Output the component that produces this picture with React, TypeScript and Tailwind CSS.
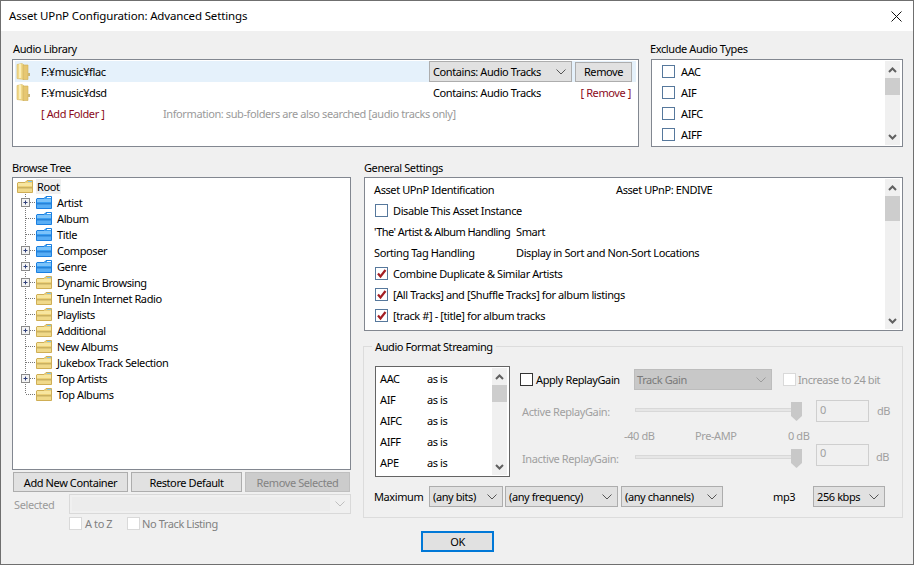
import React from 'react';

const FOLDERS = [
	{ name: 'Artist', plus: true, blue: true },
	{ name: 'Album', blue: true },
	{ name: 'Title', blue: true },
	{ name: 'Composer', plus: true, blue: true },
	{ name: 'Genre', plus: true, blue: true },
	{ name: 'Dynamic Browsing', plus: true },
	{ name: 'TuneIn Internet Radio' },
	{ name: 'Playlists' },
	{ name: 'Additional', plus: true },
	{ name: 'New Albums' },
	{ name: 'Jukebox Track Selection' },
	{ name: 'Top Artists', plus: true },
	{ name: 'Top Albums' },
];

const FORMATS = ['AAC', 'AIF', 'AIFC', 'AIFF', 'APE'];

function Chevron({ color = '#555' }: { color?: string }) {
	return (
		<svg width="10" height="6" viewBox="0 0 10 6" className="shrink-0">
			<polyline points="0.5,0.5 5,5 9.5,0.5" fill="none" stroke={color} strokeWidth="1" />
		</svg>
	);
}

function Scrollbar({ thumb }: { thumb: number }) {
	return (
		<div className="flex h-full w-[15px] shrink-0 flex-col bg-[#f0f0f0]">
			<div className="flex h-[17px] items-center justify-center">
				<svg width="9" height="6" viewBox="0 0 9 6">
					<polyline points="1,5 4.5,1.5 8,5" fill="none" stroke="#606060" strokeWidth="2" />
				</svg>
			</div>
			<div className="bg-[#cdcdcd]" style={{ height: thumb }} />
			<div className="flex-1" />
			<div className="flex h-[17px] items-center justify-center">
				<svg width="9" height="6" viewBox="0 0 9 6">
					<polyline points="1,1 4.5,4.5 8,1" fill="none" stroke="#606060" strokeWidth="2" />
				</svg>
			</div>
		</div>
	);
}

function Checkbox({ checked, tone = 'normal' }: { checked?: boolean; tone?: 'normal' | 'dark' | 'disabled' }) {
	const border = tone === 'dark' ? 'border-[#333333]' : tone === 'disabled' ? 'border-[#d9d9d9]' : 'border-[#56789c]';
	return (
		<span className={`flex h-[13px] w-[13px] shrink-0 items-center justify-center border bg-white ${border}`}>
			{checked && (
				<svg width="11" height="11" viewBox="0 0 11 11">
					<polyline points="2,5.5 4.5,8.5 9.5,2" fill="none" stroke="#a31f24" strokeWidth="2.2" />
				</svg>
			)}
		</span>
	);
}

function Combo({ label, className }: { label: string; className: string }) {
	return (
		<div className={`flex h-[21px] shrink-0 items-center justify-between border border-[#adadad] bg-[#e1e1e1] pl-[3px] pr-[5px] ${className}`}>
			<span>{label}</span>
			<Chevron />
		</div>
	);
}

function TallFolder() {
	return (
		<svg width="14" height="17" viewBox="0 0 14 17" className="ml-px shrink-0">
			<path d="M1 1.5 L6 0.5 L8 2 L8 16.5 L1 15.5 Z" fill="#f1d98a" stroke="#d8bb63" strokeWidth="0.6" />
			<path d="M3 1 L5 1 L5 15 L3 15 Z" fill="#fbeeb8" />
			<path d="M7 2 L12 2 L12 16.5 L7 16.5 Z" fill="#e6c772" stroke="#cfae58" strokeWidth="0.6" />
			<rect x="12" y="10" width="2" height="3" fill="#c9b679" />
		</svg>
	);
}

function TreeFolder({ blue }: { blue?: boolean }) {
	const edge = blue ? '#1b7fe0' : '#cfae55';
	const front = blue ? '#3b9ff2' : '#ecd078';
	const light = blue ? '#7cc3fa' : '#f7e6a0';
	const stripe = blue ? '#1468bd' : '#a8924a';
	const low = blue ? '#59aef5' : '#f0d98a';
	return (
		<svg width="16" height="13" viewBox="0 0 16 13" className="shrink-0">
			<path d="M1 2.5 H8 L10 0.5 H15.5 V12.5 H0.5 V3 Z" fill={front} stroke={edge} strokeWidth="1" />
			<rect x="11" y="1" width="4" height="1" fill={blue ? '#ffffff' : '#7fc4ee'} />
			<rect x="1" y="3" width="14" height="3" fill={light} />
			<rect x="1" y="6" width="14" height="1.5" fill={front} />
			<rect x="1" y="7.5" width="14" height="1" fill={stripe} />
			<rect x="1" y="8.5" width="14" height="3.5" fill={low} />
		</svg>
	);
}

function TreeLines({ plus, last }: { plus?: boolean; last?: boolean }) {
	return (
		<svg width="23" height="16" viewBox="0 0 23 16" className="shrink-0">
			<line x1="12.5" y1="0" x2="12.5" y2={last ? 8 : 16} stroke="#777" strokeDasharray="1 1" />
			<line x1="13" y1="8.5" x2="22" y2="8.5" stroke="#777" strokeDasharray="1 1" />
			{plus && (
				<g>
					<rect x="8.5" y="4.5" width="8" height="8" fill="#f4f4f4" stroke="#8a8a8a" />
					<line x1="10.5" y1="8.5" x2="14.5" y2="8.5" stroke="#30407a" />
					<line x1="12.5" y1="6.5" x2="12.5" y2="10.5" stroke="#30407a" />
				</g>
			)}
		</svg>
	);
}

function CheckRow({ label, checked }: { label: string; checked?: boolean }) {
	return (
		<div className="ml-px flex h-[21px] items-center gap-[5px]">
			<Checkbox checked={checked} />
			<span>{label}</span>
		</div>
	);
}

function Slider({ top }: { top: string }) {
	return (
		<div className={`flex w-[167px] shrink-0 items-start ${top}`}>
			<div className="mt-[6px] h-[4px] flex-1 border border-[#d8d8d8] bg-[#e6e6e6]" />
			<svg width="11" height="19" viewBox="0 0 11 19" className="-ml-[4px] shrink-0">
				<polygon points="0,0 11,0 11,14 5.5,19 0,14" fill="#c8c8c8" />
			</svg>
		</div>
	);
}

function BarButton({ label, className }: { label: string; className: string }) {
	return <div className={`flex h-[20px] items-center justify-center border ${className}`}>{label}</div>;
}

export default function App() {
	return (
		<div className="box-border flex h-[565px] w-[914px] flex-col overflow-hidden whitespace-nowrap border border-[#6f6f6f] bg-[#f0f0f0] text-[11px] leading-[15px] tracking-[-0.4px] text-black [font-family:'Noto_Sans',sans-serif]">
			<div className="flex h-[30px] shrink-0 items-center justify-between bg-white pl-[8px] pr-[11px]">
				<span className="mb-px text-[11.5px] tracking-[-0.15px]">Asset UPnP Configuration: Advanced Settings</span>
				<svg width="11" height="11" viewBox="0 0 11 11">
					<path d="M0.5 0.5 L10.5 10.5 M10.5 0.5 L0.5 10.5" stroke="#111" strokeWidth="1" />
				</svg>
			</div>

			<div className="flex flex-1 flex-col pl-[11px] pt-[10px]">
				<div className="flex gap-[12px]">
					<div className="w-[627px]">
						<div className="mb-[2px] h-[16px] pl-px">Audio Library</div>
						<div className="box-border h-[88px] border border-[#828790] bg-white px-[2px] pt-px">
							<div className="flex h-[21px] items-center bg-[#e5f1fb]">
								<TallFolder />
								<span className="ml-[11px] flex-1">F:¥music¥flac</span>
								<div className="flex w-[207px] items-center gap-[3px] pr-[4px]">
									<Combo label="Contains: Audio Tracks" className="w-[143px]" />
									<BarButton label="Remove" className="w-[57px] border-[#adadad] bg-[#e1e1e1]" />
								</div>
							</div>
							<div className="flex h-[21px] items-center">
								<TallFolder />
								<span className="ml-[11px] flex-1">F:¥music¥dsd</span>
								<div className="flex w-[207px] items-center justify-between pl-[4px] pr-[5px]">
									<span>Contains: Audio Tracks</span>
									<span className="text-[#8b0a1a]">[ Remove ]</span>
								</div>
							</div>
							<div className="flex h-[21px] items-center pl-[26px]">
								<span className="w-[122px] text-[#8b0a1a]">[ Add Folder ]</span>
								<span className="text-[#9a9a9a]">Information: sub-folders are also searched [audio tracks only]</span>
							</div>
						</div>
					</div>

					<div className="w-[252px]">
						<div className="mb-[2px] -ml-px h-[16px]">Exclude Audio Types</div>
						<div className="box-border flex h-[88px] border border-[#828790] bg-white py-px pr-[2px]">
							<div className="flex-1 pl-[10px]">
								{['AAC', 'AIF', 'AIFC', 'AIFF'].map((type) => (
									<div key={type} className="flex h-[21px] items-center gap-[6px]">
										<Checkbox />
										<span>{type}</span>
									</div>
								))}
							</div>
							<Scrollbar thumb={17} />
						</div>
					</div>
				</div>

				<div className="mt-[13px] flex gap-[13px]">
					<div className="w-[339px]">
						<div className="mb-px h-[16px]">Browse Tree</div>
						<div className="box-border h-[293px] border border-[#828790] bg-white">
							<div className="flex h-[16px] items-center pl-[4px]">
								<TreeFolder />
								<span className="ml-[3px] bg-[#f0f0f0] px-px">Root</span>
							</div>
							{FOLDERS.map((folder, i) => (
								<div key={folder.name} className="flex h-[16px] items-center">
									<TreeLines plus={folder.plus} last={i === FOLDERS.length - 1} />
									<TreeFolder blue={folder.blue} />
									<span className="ml-[5px]">{folder.name}</span>
								</div>
							))}
						</div>
						<div className="mt-[2px] flex gap-[3px] pl-px">
							<BarButton label="Add New Container" className="w-[115px] border-[#adadad] bg-[#e1e1e1]" />
							<BarButton label="Restore Default" className="w-[111px] border-[#adadad] bg-[#e1e1e1]" />
							<BarButton label="Remove Selected" className="w-[105px] border-[#bfbfbf] bg-[#cccccc] text-[#838383]" />
						</div>
						<div className="mt-[2px] flex items-center pl-[2px]">
							<span className="w-[55px] text-[#9a9a9a]">Selected</span>
							<div className="flex h-[20px] flex-1 items-center border border-[#d9d9d9] p-[2px] pr-[5px]">
								<div className="mr-[5px] h-full flex-1 bg-[#ececec]" />
								<Chevron color="#bfbfbf" />
							</div>
						</div>
						<div className="mt-[3px] flex h-[13px] items-center pl-[57px] text-[#808080]">
							<Checkbox tone="disabled" />
							<span className="ml-[3px] w-[42px]">A to Z</span>
							<Checkbox tone="disabled" />
							<span className="ml-[2px]">No Track Listing</span>
						</div>
					</div>

					<div className="w-[539px]">
						<div className="mb-px h-[16px]">General Settings</div>
						<div className="box-border flex h-[154px] border border-[#828790] bg-white py-px pr-[2px]">
							<div className="flex-1 pl-[9px]">
								<div className="flex h-[21px] items-center">
									<span className="w-[242px]">Asset UPnP Identification</span>
									<span>Asset UPnP: ENDIVE</span>
								</div>
								<CheckRow label="Disable This Asset Instance" />
								<div className="flex h-[21px] items-center">
									<span className="w-[142px] tracking-[-0.55px]">'The' Artist &amp; Album Handling</span>
									<span>Smart</span>
								</div>
								<div className="flex h-[21px] items-center">
									<span className="w-[142px]">Sorting Tag Handling</span>
									<span>Display in Sort and Non-Sort Locations</span>
								</div>
								<CheckRow checked label="Combine Duplicate & Similar Artists" />
								<CheckRow checked label="[All Tracks] and [Shuffle Tracks] for album listings" />
								<CheckRow checked label="[track #] - [title] for album tracks" />
							</div>
							<Scrollbar thumb={25} />
						</div>

						<div className="relative -ml-px mt-[15px] box-border h-[172px] w-[540px] border border-[#dcdcdc] pl-[11px] pt-[19px]">
							<span className="absolute -top-[8px] left-[8px] bg-[#f0f0f0] px-[3px]">Audio Format Streaming</span>
							<div className="flex">
								<div className="box-border flex h-[111px] w-[135px] shrink-0 border border-[#646464] bg-white py-px pr-[2px]">
									<div className="flex-1 pl-[4px]">
										{FORMATS.map((format) => (
											<div key={format} className="flex h-[21px] items-center">
												<span className="w-[47px]">{format}</span>
												<span>as is</span>
											</div>
										))}
									</div>
									<Scrollbar thumb={17} />
								</div>

								<div className="ml-[10px] flex-1 pt-[3px]">
									<div className="flex h-[21px] items-center">
										<div className="flex w-[114px] items-center gap-[3px]">
											<Checkbox tone="dark" />
											<span>Apply ReplayGain</span>
										</div>
										<div className="flex h-[21px] w-[138px] items-center justify-between border border-[#bdbdbd] bg-[#c8c8c8] pl-[2px] pr-[5px] text-[#7a7a7a]">
											<span>Track Gain</span>
											<Chevron color="#9c9c9c" />
										</div>
										<div className="ml-[11px] flex items-center gap-[2px] text-[#9a9a9a]">
											<Checkbox tone="disabled" />
											<span>Increase to 24 bit</span>
										</div>
									</div>

									<div className="mt-[10px] flex h-[22px] items-start text-[#a0a0a0]">
										<span className="mt-[4px] w-[115px] pl-[2px]">Active ReplayGain:</span>
										<Slider top="mt-[2px]" />
										<div className="ml-[14px] box-border h-[22px] w-[53px] border border-[#cfcfcf] pl-[3px] pt-[1px]">0</div>
										<span className="ml-[8px] mt-[3px]">dB</span>
									</div>

									<div className="mt-[6px] flex h-[14px] items-center pl-[104px] text-[#a0a0a0]">
										<span className="w-[71px]">-40 dB</span>
										<span className="w-[93px]">Pre-AMP</span>
										<span>0 dB</span>
									</div>

									<div className="mt-[2px] flex h-[22px] items-start text-[#a0a0a0]">
										<span className="mt-[7px] w-[115px] pl-[2px]">Inactive ReplayGain:</span>
										<Slider top="mt-[5px]" />
										<div className="ml-[14px] box-border h-[22px] w-[53px] border border-[#cfcfcf] pl-[3px]">0</div>
										<span className="ml-[7px] mt-[5px]">dB</span>
									</div>
								</div>
							</div>

							<div className="-ml-px mt-[9px] flex items-center">
								<span className="-mt-px w-[55px]">Maximum</span>
								<Combo label="(any bits)" className="w-[74px]" />
								<Combo label="(any frequency)" className="ml-[2px] w-[113px]" />
								<Combo label="(any channels)" className="ml-[3px] w-[102px]" />
								<span className="-mt-px ml-[50px] w-[40px]">mp3</span>
								<Combo label="256 kbps" className="w-[72px]" />
							</div>
						</div>

						<div className="ml-[57px] mt-[13px] flex h-[21px] w-[73px] items-center justify-center border-2 border-[#0078d7] bg-[#e1e1e1]">OK</div>
					</div>
				</div>
			</div>
		</div>
	);
}
